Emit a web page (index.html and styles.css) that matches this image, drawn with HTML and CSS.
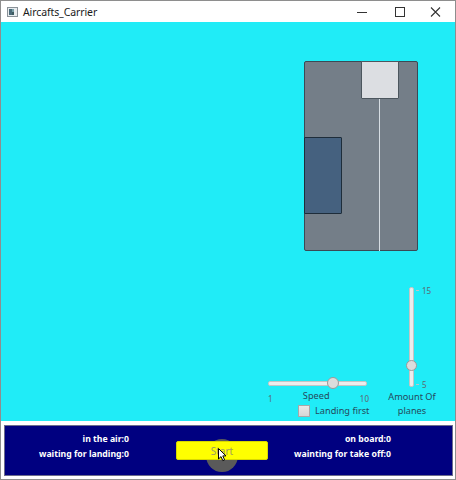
FILE: index.html
```html
<!DOCTYPE html>
<html>
<head>
<meta charset="utf-8">
<link rel="stylesheet" href="styles.css">
</head>
<body>
<div class="window">
  <div class="titlebar">
    <svg class="app-icon" width="11" height="10" viewBox="0 0 11 10">
      <rect x="0.5" y="0.5" width="10" height="9" fill="#e8ecef" stroke="#8a9298"/>
      <rect x="2" y="2" width="3" height="6" fill="#4a6a78"/>
      <rect x="5" y="2" width="2" height="3" fill="#7aa0a8"/>
      <rect x="5" y="5" width="2" height="3" fill="#3d5a60"/>
    </svg>
    <span class="title">Aircafts_Carrier</span>
    <div class="win-controls">
      <svg width="46" height="21" viewBox="0 0 46 21"><line x1="18" y1="11.5" x2="28" y2="11.5" stroke="#333" stroke-width="1"/></svg>
      <svg width="30" height="21" viewBox="0 0 30 21"><rect x="10.5" y="6.5" width="9" height="9" fill="none" stroke="#333" stroke-width="1"/></svg>
      <svg width="40" height="21" viewBox="0 0 40 21"><path d="M16 6.5 L25 15.5 M25 6.5 L16 15.5" stroke="#333" stroke-width="1.1"/></svg>
    </div>
  </div>

  <div class="canvas">
    <div class="carrier">
      <div class="deck-square"></div>
      <div class="runway-line"></div>
      <div class="hangar"></div>
    </div>

    <div class="controls">
      <div class="speed-group">
        <div class="hslider">
          <div class="htrack"></div>
          <div class="hthumb"></div>
        </div>
        <div class="speed-labels">
          <span class="tick">1</span>
          <span class="speed-label">Speed</span>
          <span class="tick">10</span>
        </div>
        <div class="check-row">
          <span class="checkbox"></span>
          <span class="check-label">Landing first</span>
        </div>
      </div>

      <div class="amount-group">
        <div class="vslider">
          <div class="vtrack"></div>
          <span class="vtick vtick-top"></span>
          <span class="vtick vtick-bottom"></span>
          <span class="vlabel vlabel-top">15</span>
          <span class="vlabel vlabel-bottom">5</span>
          <div class="vthumb"></div>
        </div>
        <div class="amount-label">Amount Of<br>planes</div>
      </div>
    </div>
  </div>

  <div class="panel">
    <div class="status">
      <div class="col col-left">
        <div>in the air:0</div>
        <div>waiting for landing:0</div>
      </div>
      <div class="btn-cell">
        <div class="click-ring"></div>
        <button class="start-btn">Start</button>
        <svg class="cursor" width="10" height="14" viewBox="0 0 10 14">
          <path d="M0.5 0.5 L0.5 11 L3 8.6 L4.8 12.6 L6.6 11.8 L4.8 7.9 L8 7.9 Z" fill="#fff" stroke="#000" stroke-width="1" stroke-linejoin="round"/>
        </svg>
      </div>
      <div class="col col-right">
        <div>on board:0</div>
        <div>wainting for take off:0</div>
      </div>
    </div>
  </div>
</div>
</body>
</html>
```

FILE: styles.css
```css
* { box-sizing: border-box; }

html, body {
  margin: 0;
  padding: 0;
  background: #ffffff;
}

body {
  font-family: "Noto Sans", "Open Sans", sans-serif;
}

.window {
  width: 456px;
  height: 480px;
  border: 1px solid #8e8e8e;
  display: flex;
  flex-direction: column;
  background: #ffffff;
}

/* ---------- title bar ---------- */
.titlebar {
  height: 21px;
  flex: 0 0 21px;
  display: flex;
  align-items: center;
  background: #ffffff;
}

.app-icon {
  margin-left: 6px;
  margin-top: 1px;
}

.title {
  margin-left: 5px;
  font-family: "Noto Sans", sans-serif;
  font-size: 10.5px;
  color: #1a1a1a;
  letter-spacing: -0.1px;
}

.win-controls {
  margin-left: auto;
  display: flex;
  align-items: center;
  height: 21px;
}

.win-controls svg { display: block; }

/* ---------- canvas ---------- */
.canvas {
  flex: 0 0 399px;
  height: 399px;
  background: #20ecf7;
  position: relative;
  display: flex;
  flex-direction: column;
  justify-content: flex-end;
  align-items: flex-end;
  padding: 0 13px 3px 0;
}

.carrier {
  position: absolute;
  left: 303px;
  top: 39px;
  width: 114px;
  height: 190px;
  background: #747e88;
  border: 1px solid #3a4a55;
  border-radius: 2px;
}

.deck-square {
  position: absolute;
  left: 56px;
  top: -1px;
  width: 38px;
  height: 38px;
  background: #dcdee2;
  border: 1px solid #4c565e;
  border-radius: 1px;
}

.runway-line {
  position: absolute;
  left: 74px;
  top: 37px;
  width: 1px;
  bottom: -1px;
  background: #d6dde3;
}

.hangar {
  position: absolute;
  left: -1px;
  top: 75px;
  width: 38px;
  height: 77px;
  background: #45617f;
  border: 1px solid #1e2d3a;
  border-radius: 1px;
}

/* ---------- controls ---------- */
.controls {
  display: flex;
  align-items: flex-end;
  gap: 11px;
}

.speed-group {
  width: 108px;
  display: flex;
  flex-direction: column;
}

.hslider {
  position: relative;
  height: 13px;
}

.htrack {
  position: absolute;
  left: 5px;
  width: 99px;
  top: 4px;
  height: 5px;
  background: #ececec;
  border: 1px solid #c4c4c4;
  border-radius: 2px;
}

.hthumb {
  position: absolute;
  left: 64px;
  top: 0;
  width: 12px;
  height: 12px;
  border-radius: 50%;
  background: #dcdcdc;
  border: 1px solid #9a9a9a;
}

.speed-labels {
  height: 13px;
  display: flex;
  justify-content: space-between;
  padding: 0 2px 0 5px;
}

.tick {
  align-self: flex-end;
  font-size: 8px;
  line-height: 8px;
  color: #5a6a70;
}

.speed-label {
  font-size: 9.2px;
  line-height: 11px;
  color: #244a5c;
}

.check-row {
  height: 15px;
  display: flex;
  align-items: center;
  padding-left: 35px;
  gap: 5px;
  white-space: nowrap;
}

.checkbox {
  flex: 0 0 12px;
  width: 12px;
  height: 12px;
  background: linear-gradient(#e8e8e8, #d6d6d6);
  border: 1px solid #a8a8a8;
}

.check-label {
  font-size: 9.2px;
  line-height: 12px;
  color: #244a5c;
  white-space: nowrap;
}

.amount-group {
  width: 60px;
  display: flex;
  flex-direction: column;
  align-items: center;
}

.vslider {
  position: relative;
  width: 60px;
  height: 103px;
}

.vtrack {
  position: absolute;
  left: 27px;
  top: 0;
  width: 5px;
  height: 100px;
  background: #ececec;
  border: 1px solid #c4c4c4;
  border-radius: 2px;
}

.vtick {
  position: absolute;
  left: 34px;
  width: 3px;
  height: 1px;
  background: #b8c8cc;
}

.vtick-top { top: 3px; }
.vtick-bottom { top: 97px; }

.vlabel {
  position: absolute;
  left: 40px;
  font-size: 8px;
  line-height: 8px;
  color: #5a6a70;
}

.vlabel-top { top: 0; }
.vlabel-bottom { top: 94px; }

.vthumb {
  position: absolute;
  left: 24px;
  top: 73px;
  width: 11px;
  height: 11px;
  border-radius: 50%;
  background: #dcdcdc;
  border: 1px solid #9a9a9a;
}

.amount-label {
  font-size: 9.2px;
  line-height: 14px;
  text-align: center;
  color: #244a5c;
  white-space: nowrap;
}

/* ---------- bottom panel ---------- */
.panel {
  flex: 1 1 auto;
  padding: 4px 2px 2px 3px;
  background: #ffffff;
}

.status {
  height: 51px;
  background: #000080;
  border: 1px solid #6c6c8c;
  display: grid;
  grid-template-columns: 124px 47px 92px 123px 1fr;
  align-items: start;
}

.col {
  padding-top: 6px;
  font-family: "Noto Sans", sans-serif;
  font-weight: bold;
  font-size: 8.7px;
  line-height: 15px;
  color: #ffffff;
  text-align: right;
  white-space: nowrap;
}

.col-left { grid-column: 1; }

.btn-cell {
  grid-column: 3;
  position: relative;
  height: 49px;
}

.col-right { grid-column: 4; }

.start-btn {
  position: relative;
  margin-top: 15px;
  width: 92px;
  height: 19px;
  padding: 0;
  background: #ffff00;
  border: 1px solid #d8d800;
  border-radius: 2px;
  font-family: "Noto Sans", sans-serif;
  font-size: 10px;
  color: #9c9c62;
  display: block;
}

.click-ring {
  position: absolute;
  left: 30px;
  top: 13px;
  width: 32px;
  height: 33px;
  border-radius: 50%;
  background: #5a5a5a;
}

.cursor {
  position: absolute;
  left: 42px;
  top: 22px;
}
```
